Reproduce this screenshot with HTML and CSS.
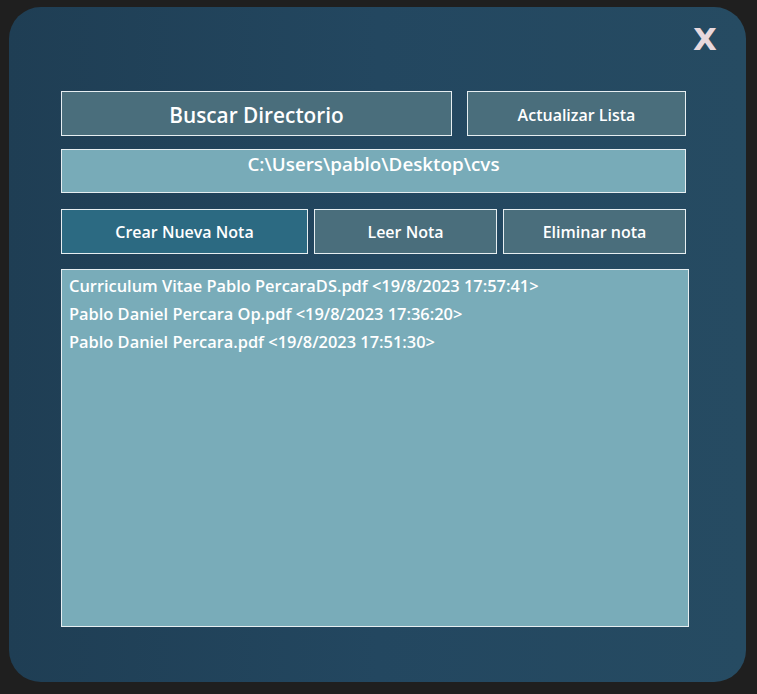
FILE: index.html
```html
<!DOCTYPE html>
<html lang="es">
<head>
<meta charset="utf-8">
<title>Notas</title>
<link rel="stylesheet" href="styles.css">
</head>
<body>
<div class="panel">
  <div class="header">
    <span class="close">X</span>
  </div>
  <div class="row row1">
    <div class="btn btn-big">Buscar Directorio</div>
    <div class="btn btn-update">Actualizar Lista</div>
  </div>
  <div class="path">C:\Users\pablo\Desktop\cvs</div>
  <div class="row row3">
    <div class="btn btn-create">Crear Nueva Nota</div>
    <div class="btn btn-read">Leer Nota</div>
    <div class="btn btn-del">Eliminar nota</div>
  </div>
  <div class="list">
    <div class="item">Curriculum Vitae Pablo PercaraDS.pdf &lt;19/8/2023 17:57:41&gt;</div>
    <div class="item">Pablo Daniel Percara Op.pdf &lt;19/8/2023 17:36:20&gt;</div>
    <div class="item">Pablo Daniel Percara.pdf &lt;19/8/2023 17:51:30&gt;</div>
  </div>
</div>
</body>
</html>
```

FILE: styles.css
```css
html, body {
  margin: 0;
  padding: 0;
  background: #1f1f1f;
}
body {
  font-family: "Open Sans", "Noto Sans", sans-serif;
  color: #ffffff;
}
.panel {
  box-sizing: border-box;
  width: 737px;
  height: 675px;
  margin: 7px 0 0 9px;
  border-radius: 32px;
  background: linear-gradient(90deg, #1f3e54 0%, #234760 50%, #264b62 100%);
  padding: 0 60px 0 52px;
  display: flex;
  flex-direction: column;
}
.header {
  height: 84px;
  display: flex;
  justify-content: flex-end;
  margin-right: -31px;
}
.close {
  font-family: "DejaVu Sans", sans-serif;
  font-weight: 700;
  font-size: 31px;
  line-height: 1;
  color: #e8d8dd;
  margin-top: 17px;
}
.row {
  display: flex;
}
.row1 {
  gap: 15px;
  height: 45px;
}
.btn {
  box-sizing: border-box;
  border: 1px solid #e6eef1;
  background: #4a6e7c;
  display: flex;
  align-items: center;
  justify-content: center;
  font-weight: 600;
  font-size: 16px;
  padding-top: 1px;
}
.btn-big {
  width: 391px;
  font-size: 20.8px;
  padding-top: 3px;
}
.btn-update {
  width: 219px;
  padding-top: 2px;
}
.path {
  box-sizing: border-box;
  margin-top: 13px;
  height: 44px;
  border: 1px solid #e6eef1;
  background: #78abb8;
  text-align: center;
  font-weight: 600;
  font-size: 18.8px;
  line-height: 24px;
  padding-top: 2px;
}
.row3 {
  margin-top: 16px;
  height: 45px;
  gap: 6px;
}
.btn-create {
  width: 247px;
  background: #2c6a82;
}
.btn-read, .btn-del {
  width: 183px;
}
.list {
  box-sizing: border-box;
  margin-top: 15px;
  margin-right: -3px;
  height: 358px;
  border: 1px solid #e6eef1;
  background: #79acb9;
  padding: 2px 7px;
}
.item {
  font-weight: 600;
  font-size: 16.4px;
  line-height: 28px;
  white-space: nowrap;
}
```
